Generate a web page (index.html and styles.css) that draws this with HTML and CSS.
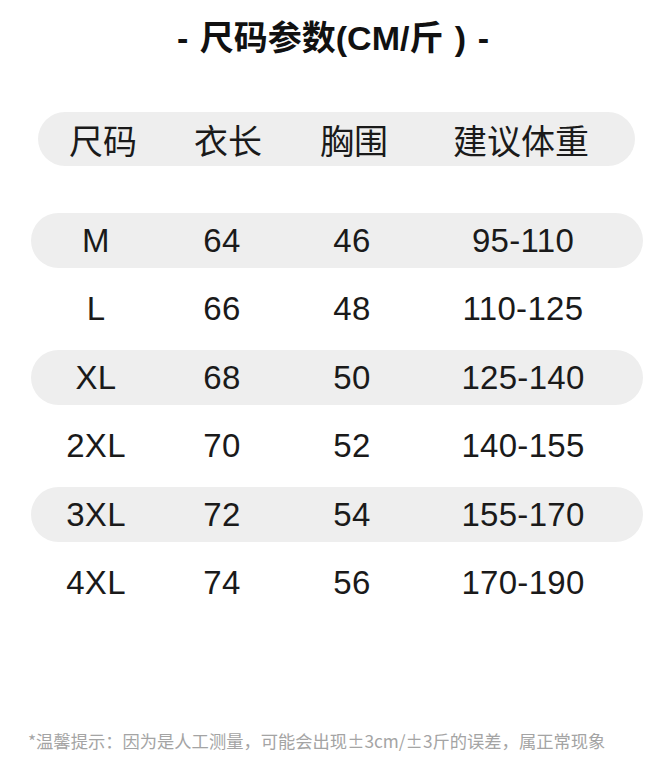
FILE: index.html
```html
<!DOCTYPE html>
<html lang="zh">
<head>
<meta charset="utf-8">
<title>尺码参数</title>
<link rel="stylesheet" href="styles.css">
</head>
<body>
<div class="page">
  <h1 class="title">- 尺码参数(CM/斤 ) -</h1>
  <div class="head">
    <span>尺码</span><span>衣长</span><span>胸围</span><span>建议体重</span>
  </div>
  <div class="rows">
    <div class="row shaded"><span>M</span><span>64</span><span>46</span><span>95-110</span></div>
    <div class="row"><span>L</span><span>66</span><span>48</span><span>110-125</span></div>
    <div class="row shaded"><span>XL</span><span>68</span><span>50</span><span>125-140</span></div>
    <div class="row"><span>2XL</span><span>70</span><span>52</span><span>140-155</span></div>
    <div class="row shaded"><span>3XL</span><span>72</span><span>54</span><span>155-170</span></div>
    <div class="row"><span>4XL</span><span>74</span><span>56</span><span>170-190</span></div>
  </div>
  <p class="note">*温馨提示：因为是人工测量，可能会出现±3cm/±3斤的误差，属正常现象</p>
</div>
</body>
</html>
```

FILE: styles.css
```css
html, body {
  margin: 0;
  padding: 0;
  background: #ffffff;
}

.page {
  width: 660px;
  height: 777px;
  font-family: "Liberation Sans", "Noto Sans CJK SC", sans-serif;
  color: #1c1c1c;
}

.title {
  margin: 0;
  padding: 18px 0 0 6px;
  font-size: 34px;
  line-height: 40px;
  font-weight: bold;
  text-align: center;
  word-spacing: 2px;
  font-family: "Liberation Sans", "Noto Sans CJK SC", sans-serif;
  color: #111111;
}

.head {
  margin: 54px 25px 0 38px;
  height: 54px;
  border-radius: 27px;
  background: #eeeeee;
  display: grid;
  grid-template-columns: 130px 120px 132px 202px;
  align-items: center;
  font-family: "Noto Sans CJK SC", sans-serif;
  font-size: 34px;
  color: #1a1a1a;
}

.head span,
.row span {
  text-align: center;
  white-space: nowrap;
}

.rows {
  margin: 47px 17px 0 31px;
  display: flex;
  flex-direction: column;
  gap: 13.6px;
}

.row {
  height: 55px;
  border-radius: 28px;
  display: grid;
  grid-template-columns: 130px 122px 138px 204px;
  align-items: center;
  font-size: 33px;
  letter-spacing: 0.3px;
  color: #1a1a1a;
}

.row.shaded {
  background: #eeeeee;
}

.note {
  margin: 118px 0 0 28px;
  font-family: "Noto Sans CJK SC", sans-serif;
  font-size: 17.3px;
  line-height: 24px;
  color: #a4a4a4;
  white-space: nowrap;
}
```
